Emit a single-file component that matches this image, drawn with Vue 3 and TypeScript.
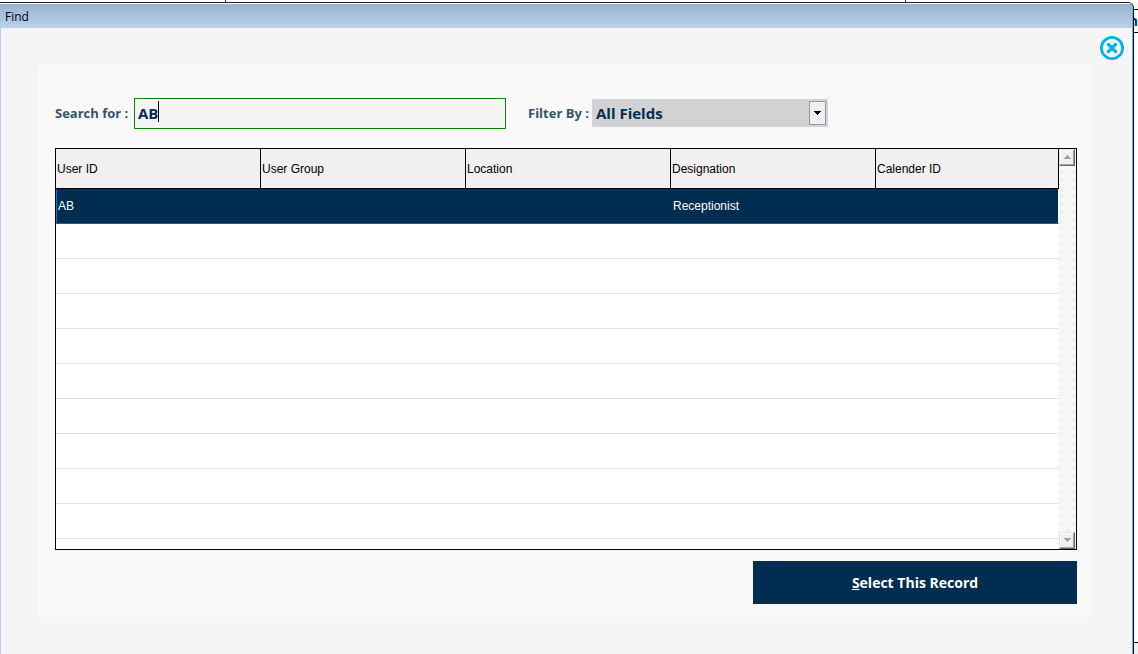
<script setup lang="ts">
import { ref } from 'vue'

interface UserRecord {
  userId: string
  group: string
  location: string
  designation: string
  calendarId: string
}

const query = ref('AB')
const filter = ref('All Fields')
const filters = ['All Fields', 'User ID', 'User Group', 'Location', 'Designation', 'Calender ID']
const columns = ['User ID', 'User Group', 'Location', 'Designation', 'Calender ID']
const records: UserRecord[] = [
  { userId: 'AB', group: '', location: '', designation: 'Receptionist', calendarId: '' },
]
const emptyRows = 10
</script>

<template>
  <div class="desktop">
    <div class="behind-top"><i class="seg first"></i><i class="seg second"></i></div>
    <div class="stage">
      <main class="dialog">
        <header class="titlebar">Find</header>
        <div class="body">
          <div class="tools">
            <button class="close" type="button" aria-label="Close">
              <svg viewBox="0 0 24 24" width="24" height="24">
                <circle cx="12" cy="12" r="10.6" fill="none" stroke="#00b4e6" stroke-width="2.8" />
                <path d="M8.4 8.4L15.6 15.6M15.6 8.4L8.4 15.6" stroke="#00b4e6" stroke-width="3.2" stroke-linecap="round" />
              </svg>
            </button>
          </div>
          <section class="panel">
            <form class="criteria" @submit.prevent>
              <label class="caption" for="search">Search for :</label>
              <div class="search">
                <input id="search" v-model="query" type="text" />
                <span class="caret"></span>
              </div>
              <label class="caption filter-caption" for="filter">Filter By :</label>
              <div class="filter">
                <select id="filter" v-model="filter">
                  <option v-for="f in filters" :key="f">{{ f }}</option>
                </select>
                <span class="drop">
                  <svg viewBox="0 0 7 4" width="7" height="4" shape-rendering="crispEdges">
                    <path d="M0 0H7V1H6V2H5V3H4V4H3V3H2V2H1V1H0Z" />
                  </svg>
                </span>
              </div>
            </form>
            <div class="grid">
              <div class="rows">
                <table>
                  <colgroup>
                    <col class="wide" /><col class="wide" /><col class="wide" /><col class="wide" /><col />
                  </colgroup>
                  <thead>
                    <tr><th v-for="c in columns" :key="c" scope="col">{{ c }}</th></tr>
                  </thead>
                  <tbody>
                    <tr v-for="r in records" :key="r.userId" class="selected">
                      <td>{{ r.userId }}</td>
                      <td>{{ r.group }}</td>
                      <td>{{ r.location }}</td>
                      <td>{{ r.designation }}</td>
                      <td>{{ r.calendarId }}</td>
                    </tr>
                    <tr v-for="n in emptyRows" :key="n">
                      <td v-for="c in columns" :key="c"></td>
                    </tr>
                  </tbody>
                </table>
              </div>
              <div class="scrollbar">
                <button type="button" aria-label="Scroll up">
                  <svg viewBox="0 0 7 4" width="7" height="4" shape-rendering="crispEdges">
                    <path d="M3 0H4V1H5V2H6V3H7V4H0V3H1V2H2V1H3Z" fill="#a0a0a0" />
                  </svg>
                </button>
                <button type="button" aria-label="Scroll down">
                  <svg viewBox="0 0 7 4" width="7" height="4" shape-rendering="crispEdges">
                    <path d="M0 0H7V1H6V2H5V3H4V4H3V3H2V2H1V1H0Z" fill="#a0a0a0" />
                  </svg>
                </button>
              </div>
            </div>
            <div class="actions">
              <button class="select-record" type="button"><u>S</u>elect This Record</button>
            </div>
          </section>
        </div>
      </main>
      <aside class="behind-side">
        <div class="cream"></div>
        <div class="letter">n</div>
        <div class="blank"></div>
        <div class="foot"></div>
      </aside>
    </div>
  </div>
</template>

<style>
body {
  background: #fff;
}
</style>

<style scoped>
* {
  box-sizing: border-box;
}
.desktop {
  display: flex;
  flex-direction: column;
  min-height: 100vh;
  font-family: "Open Sans", "Noto Sans", sans-serif;
}
.behind-top {
  display: flex;
  height: 2px;
  background: #fff;
}
.seg {
  border-right: 1px solid #333;
}
.first {
  width: 226px;
}
.second {
  width: 680px;
}
.stage {
  display: flex;
  flex: 1;
  background: #fff;
}
.dialog {
  display: flex;
  flex-direction: column;
  flex: 1;
  min-width: 0;
  border-top: 1px solid #222;
  border-right: 1px solid #000;
  border-radius: 0 6px 0 0;
  overflow: hidden;
  background: #f5f5f5;
}
.titlebar {
  height: 25px;
  padding-left: 5px;
  border-top: 1px solid #fff;
  border-right: 1px solid #35c8f5;
  background: linear-gradient(#99b4d1, #b9d1ea);
  color: #000;
  font-size: 12px;
  line-height: 25px;
}
.body {
  flex: 1;
  padding: 0 39px 37px 37px;
  border-left: 1px solid #b9d1ea;
  border-right: 1px solid #35c8f5;
}
.tools {
  display: flex;
  justify-content: flex-end;
  height: 37px;
  margin-right: -31px;
  padding-top: 8px;
}
.close {
  width: 24px;
  height: 24px;
  padding: 0;
  border: 0;
  background: none;
}
.close svg {
  display: block;
}
.panel {
  padding: 33px 16px 13px 17px;
  background: #f9f9f9;
}
.criteria {
  display: flex;
  align-items: center;
  height: 31px;
  margin-bottom: 19px;
}
.caption {
  flex: none;
  width: 79px;
  padding-bottom: 2px;
  color: #34536f;
  font-size: 13px;
  font-weight: 700;
  line-height: 18px;
  white-space: nowrap;
}
.filter-caption {
  width: 64px;
  margin-left: 22px;
}
.search {
  position: relative;
  flex: 0 1 372px;
}
.search input {
  display: block;
  width: 100%;
  height: 31px;
  padding: 0 3px 2px;
  border: 1px solid #0a820a;
  outline: none;
  background: #f5f5f5;
  color: #002d50;
  font: 700 15px "Open Sans", "Noto Sans", sans-serif;
}
.caret {
  position: absolute;
  left: 24px;
  top: 3px;
  width: 1px;
  height: 21px;
  background: #000;
}
.filter {
  position: relative;
  flex: 0 1 236px;
  height: 29px;
}
.filter select {
  display: block;
  width: 100%;
  height: 28px;
  padding: 0 20px 0 3px;
  border: 1px solid #ccd6e4;
  border-radius: 0;
  appearance: none;
  background: #d2d2d2;
  color: #002d50;
  font: 700 15px "Open Sans", "Noto Sans", sans-serif;
}
.drop {
  position: absolute;
  top: 2px;
  right: 2px;
  display: flex;
  align-items: center;
  justify-content: center;
  width: 17px;
  height: 24px;
  border: 1px solid #999;
  background: #f0f0f0;
  pointer-events: none;
}
.grid {
  display: flex;
  height: 402px;
  border: 1px solid #000;
  background: #fff;
}
.rows {
  flex: 1;
  min-width: 0;
  overflow: hidden;
}
table {
  width: 100%;
  table-layout: fixed;
  border-spacing: 0;
  font-family: "Liberation Sans", Arial, sans-serif;
  font-size: 12px;
}
.wide {
  width: 205px;
}
th {
  height: 40px;
  padding: 0 1px;
  border-right: 1px solid #000;
  border-bottom: 1px solid #000;
  background: #f0f0f0;
  color: #000;
  font-weight: 400;
  text-align: left;
}
td {
  height: 35px;
  padding: 0 2px;
  border-bottom: 1px solid #e0e0e0;
}
td:last-child {
  border-right: 1px solid #f7f7f7;
}
.selected td {
  border-bottom-color: #0a64b4;
  background: #002d50;
  background-clip: padding-box;
  color: #fff;
}
.selected td:first-child {
  padding-left: 1px;
  border-left: 1px solid #0a78d7;
}
.scrollbar {
  display: flex;
  flex-direction: column;
  justify-content: space-between;
  width: 17px;
  padding-right: 1px;
  background: repeating-conic-gradient(#f0f0f0 0 25%, #fff 0 50%) 0 0 / 2px 2px;
}
.scrollbar button {
  display: flex;
  align-items: center;
  justify-content: center;
  width: 16px;
  height: 17px;
  padding: 0 0 1px;
  border: 1px solid #e3e3e3;
  border-right: 1px solid #696969;
  border-bottom: 1px solid #696969;
  background: #f0f0f0;
  box-shadow: inset -1px -1px #a0a0a0, inset 1px 1px #fff;
}
.actions {
  display: flex;
  justify-content: flex-end;
  margin-top: 11px;
}
.select-record {
  width: 324px;
  height: 43px;
  padding: 0;
  border: 0;
  background: #002d50;
  color: #fff;
  font: 700 14px "Open Sans", "Noto Sans", sans-serif;
}
.behind-side {
  display: flex;
  flex-direction: column;
  width: 4px;
  overflow: hidden;
}
.cream {
  height: 8px;
  border-bottom: 1px solid #000;
  background: #fdf5e9;
}
.letter {
  height: 23px;
  border-bottom: 1px solid #000;
  color: #002d6e;
  font-size: 14px;
  font-weight: 700;
  line-height: 22px;
  direction: rtl;
}
.blank {
  flex: 1;
  border-bottom: 1px solid #000;
}
.foot {
  height: 11px;
  background: #f0f0f0;
}
</style>
